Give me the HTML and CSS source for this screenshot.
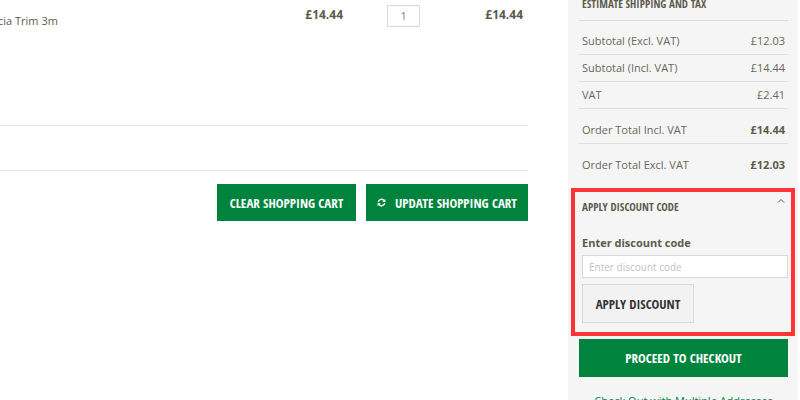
FILE: index.html
```html
<!DOCTYPE html>
<html lang="en">
<head>
  <meta charset="UTF-8">
  <meta name="viewport" content="width=device-width, initial-scale=1.0">
  <title>Shopping Cart</title>
  <link rel="stylesheet" href="styles.css">
</head>
<body>
  <div class="page">
    <!-- Cart items -->
    <main class="cart">
      <table class="cart-items">
        <tr>
          <td class="product">cia Trim 3m</td>
          <td class="price">£14.44</td>
          <td class="qty"><input type="text" value="1" aria-label="Qty"></td>
          <td class="price subtotal">£14.44</td>
        </tr>
      </table>
      <div class="cart-divider"></div>
      <div class="cart-actions">
        <button type="button" class="btn btn-clear">CLEAR SHOPPING CART</button>
        <button type="submit" class="btn btn-update">
          <svg class="icon-refresh" viewBox="0 0 9 9" aria-hidden="true">
            <path d="M1.3 4A3.2 3.2 0 0 1 7 2.5M7.7 5A3.2 3.2 0 0 1 2 6.5"/>
            <path class="arrow" d="M8.4 1v3H5.4zM.6 8V5h3z"/>
          </svg>
          UPDATE SHOPPING CART
        </button>
      </div>
    </main>

    <!-- Order summary -->
    <aside class="summary">
      <h2 class="title summary-title">ESTIMATE SHIPPING AND TAX</h2>
      <table class="totals">
        <tr><th scope="row">Subtotal (Excl. VAT)</th><td>£12.03</td></tr>
        <tr><th scope="row">Subtotal (Incl. VAT)</th><td>£14.44</td></tr>
        <tr><th scope="row">VAT</th><td>£2.41</td></tr>
        <tr class="grand"><th scope="row">Order Total Incl. VAT</th><td>£14.44</td></tr>
        <tr class="grand"><th scope="row">Order Total Excl. VAT</th><td>£12.03</td></tr>
      </table>

      <form class="discount">
        <button type="button" class="title discount-toggle" aria-expanded="true">
          APPLY DISCOUNT CODE
          <svg class="icon-caret" viewBox="0 0 8 5" aria-hidden="true"><path d="M1 4.5l3-3 3 3"/></svg>
        </button>
        <label for="coupon">Enter discount code</label>
        <input type="text" id="coupon" placeholder="Enter discount code">
        <button type="submit" class="btn btn-apply">APPLY DISCOUNT</button>
      </form>

      <button type="button" class="btn btn-checkout">PROCEED TO CHECKOUT</button>
      <a href="#" class="multi-link">Check Out with Multiple Addresses</a>
    </aside>
  </div>
</body>
</html>
```

FILE: styles.css
```css
* {
  margin: 0;
  padding: 0;
  box-sizing: border-box;
}

body {
  font-family: "Open Sans", "Noto Sans", sans-serif;
  font-size: 11px;
  line-height: 18px;
  color: #5b5b4d;
  background: #fff;
  height: 100vh;
  overflow: hidden;
}

.page {
  display: flex;
  gap: 40px;
  padding-right: 2px;
  min-height: 100vh;
}

table {
  width: 100%;
  border-collapse: collapse;
}

input {
  font-family: inherit;
  border: 1px solid #d9d9d9;
  background: #fff;
  color: #777;
}

/* Cart */
.cart {
  flex: 1;
}

.cart-items {
  height: 126px;
  border-bottom: 1px solid #e5e5e5;
}

.cart-items td {
  vertical-align: top;
  padding-top: 5px;
}

.cart-items .product {
  padding-top: 12px;
  text-indent: -2px;
  white-space: nowrap;
}

.cart-items .price {
  padding-top: 6px;
  font-size: 12px;
  font-weight: 700;
  text-align: right;
}

.cart-items .subtotal {
  width: 108px;
  padding-right: 5px;
}

.cart-items .qty {
  width: 77px;
  text-align: right;
}

.qty input {
  display: block;
  width: 33px;
  height: 22px;
  margin-left: auto;
  font-size: 10px;
  text-align: center;
}

.cart-divider {
  height: 45px;
  border-bottom: 1px solid #e5e5e5;
}

.cart-actions {
  display: flex;
  justify-content: flex-end;
  gap: 10px;
  padding-top: 13px;
}

/* Buttons */
.btn {
  display: flex;
  align-items: center;
  justify-content: center;
  height: 37px;
  border: 0;
  background: #00843d;
  color: #fff;
  font-family: "Open Sans Condensed", "Roboto Condensed", "Liberation Sans Narrow", "Open Sans", sans-serif;
  font-size: 13px;
  font-weight: 700;
  white-space: nowrap;
  cursor: pointer;
}

.btn:hover {
  background: #006e33;
}

.btn-clear {
  width: 139px;
}

.btn-update {
  width: 162px;
  gap: 9px;
}

.icon-refresh {
  width: 9px;
  height: 9px;
  fill: none;
  stroke: #fff;
  stroke-width: 1.5;
}

.icon-refresh .arrow {
  fill: #fff;
  stroke: none;
}

/* Summary */
.summary {
  width: 230px;
  padding: 0 10px 0 11px;
  background: #f5f5f5;
}

.title {
  font-family: "Open Sans Condensed", "Roboto Condensed", "Liberation Sans Narrow", "Open Sans", sans-serif;
  font-size: 11px;
  font-weight: 700;
  line-height: 18px;
  color: #5b5b4d;
  white-space: nowrap;
}

.summary-title {
  height: 21px;
  padding-left: 3px;
  line-height: 8px;
  border-bottom: 1px solid #ddd;
  margin-bottom: 7px;
}

.totals th,
.totals td {
  padding: 4px 3px;
  font-weight: 400;
  text-align: left;
  color: #68685c;
  border-bottom: 1px solid #e0e0e0;
}

.totals td {
  text-align: right;
}

.totals .grand th,
.totals .grand td {
  padding-top: 12px;
}

.totals .grand td {
  font-weight: 700;
  color: #5b5b4d;
}

.totals tr:last-child th,
.totals tr:last-child td {
  border-bottom: 0;
}

/* Discount form */
.discount {
  margin: 10px -7px 3px -8px;
  padding: 6px 3px 9px 7px;
  border: 4px solid #ff3333;
}

.discount-toggle {
  display: flex;
  justify-content: space-between;
  width: 100%;
  padding-right: 3px;
  border: 0;
  background: none;
  cursor: pointer;
}

.icon-caret {
  width: 8px;
  height: 5px;
  fill: none;
  stroke: #5b5b4d;
}

.discount label {
  display: block;
  margin: 18px 0 3px;
  font-weight: 700;
}

.discount input {
  display: block;
  width: 100%;
  height: 23px;
  padding: 0 6px;
  font-size: 10px;
}

.discount input::placeholder {
  color: #c2c2c2;
}

.btn-apply {
  width: 112px;
  height: 39px;
  margin-top: 6px;
  border: 1px solid #d9d9d9;
  background: #f2f2f2;
  color: #333;
}

.btn-apply:hover {
  background: #e5e5e5;
}

.btn-checkout {
  width: 100%;
  height: 38px;
}

.multi-link {
  display: block;
  margin-top: 15px;
  text-align: center;
  color: #00843d;
  text-decoration: none;
}
```
